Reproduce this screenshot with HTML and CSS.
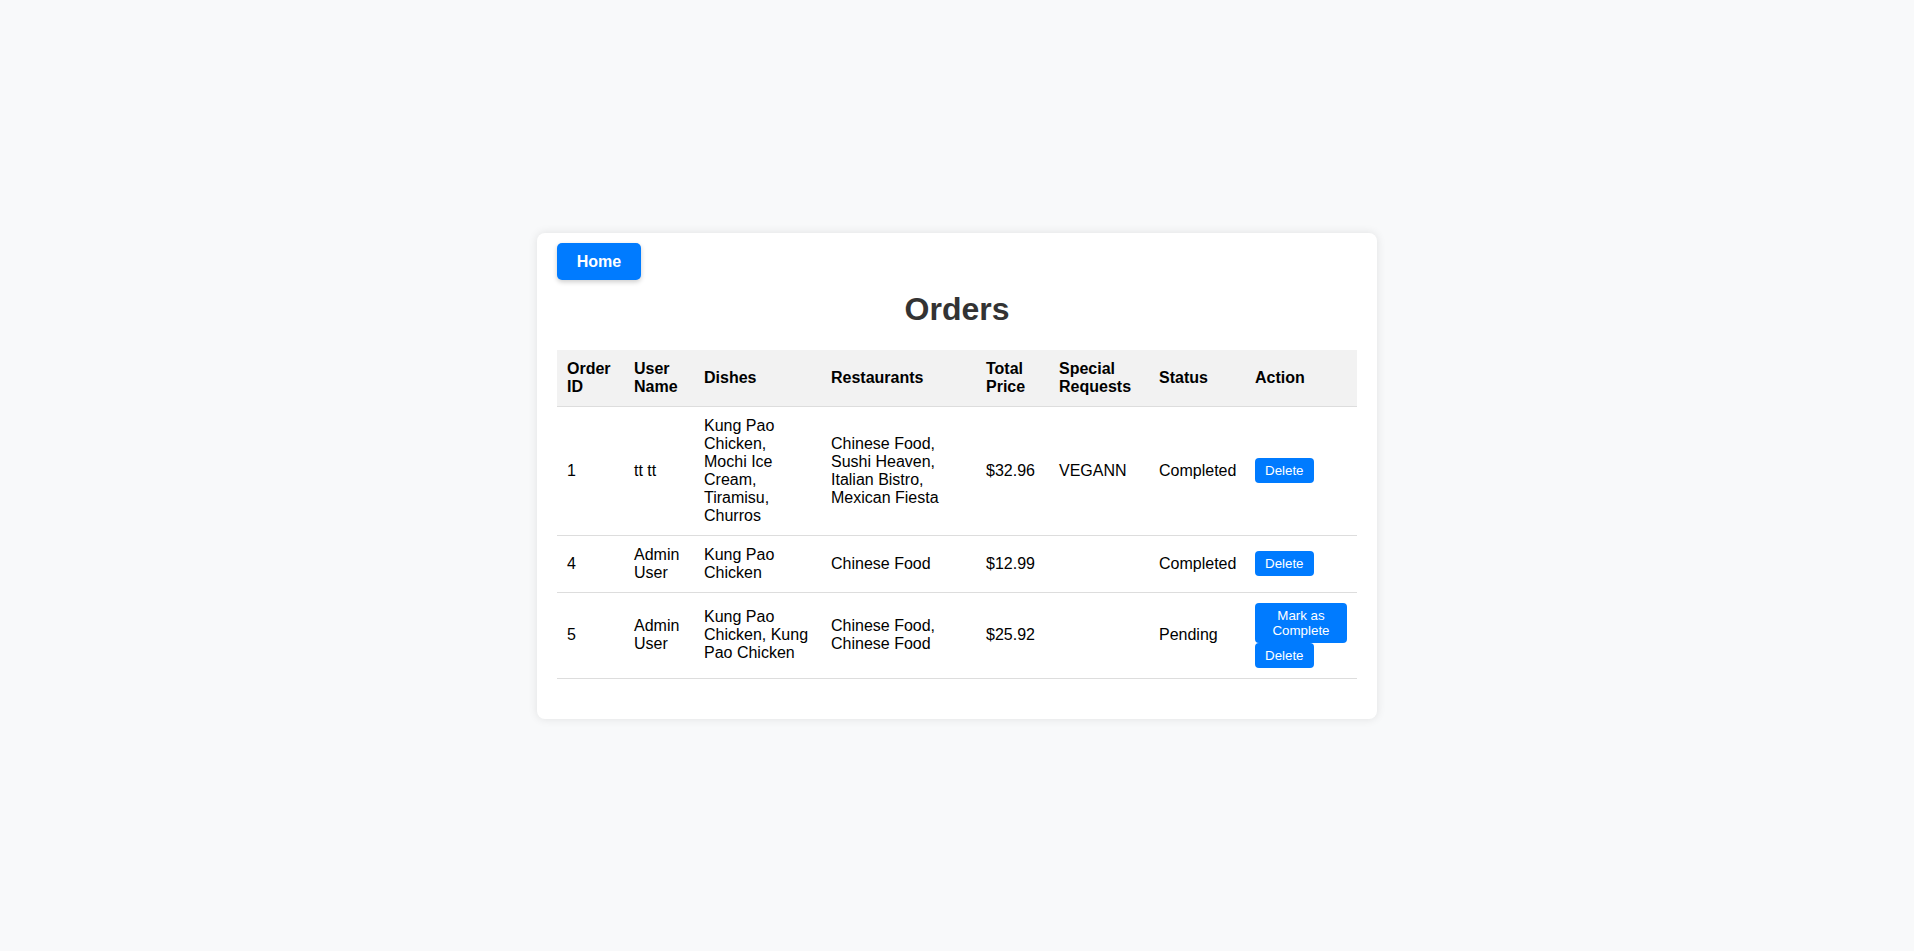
FILE: index.html
```html
<!DOCTYPE html>
<html lang="en">
<head>
<meta charset="utf-8">
<title>Orders</title>
<link rel="stylesheet" href="styles.css">
</head>
<body>
<div class="card">
  <div class="nav">
    <a class="home-btn" href="#">Home</a>
  </div>
  <h1 class="title">Orders</h1>
  <table class="orders">
    <colgroup>
      <col class="c-id">
      <col class="c-user">
      <col class="c-dishes">
      <col class="c-rest">
      <col class="c-price">
      <col class="c-req">
      <col class="c-status">
      <col class="c-action">
    </colgroup>
    <thead>
      <tr>
        <th>Order ID</th>
        <th>User Name</th>
        <th>Dishes</th>
        <th>Restaurants</th>
        <th>Total Price</th>
        <th>Special Requests</th>
        <th>Status</th>
        <th>Action</th>
      </tr>
    </thead>
    <tbody>
      <tr>
        <td>1</td>
        <td>tt tt</td>
        <td>Kung Pao Chicken, Mochi Ice Cream, Tiramisu, Churros</td>
        <td>Chinese Food, Sushi Heaven, Italian Bistro, Mexican Fiesta</td>
        <td>$32.96</td>
        <td>VEGANN</td>
        <td>Completed</td>
        <td><button class="act-btn">Delete</button></td>
      </tr>
      <tr>
        <td>4</td>
        <td>Admin User</td>
        <td>Kung Pao Chicken</td>
        <td>Chinese Food</td>
        <td>$12.99</td>
        <td></td>
        <td>Completed</td>
        <td><button class="act-btn">Delete</button></td>
      </tr>
      <tr>
        <td>5</td>
        <td>Admin User</td>
        <td>Kung Pao Chicken, Kung Pao Chicken</td>
        <td>Chinese Food, Chinese Food</td>
        <td>$25.92</td>
        <td></td>
        <td>Pending</td>
        <td><button class="act-btn">Mark as Complete</button><button class="act-btn">Delete</button></td>
      </tr>
    </tbody>
  </table>
</div>
</body>
</html>
```
FILE: styles.css
```css
html, body {
  margin: 0;
  padding: 0;
}
body {
  background: #f8f9fa;
  font-family: "Liberation Sans", Arial, sans-serif;
  font-size: 16px;
  color: #000;
  min-height: 100vh;
  display: flex;
  align-items: center;
  justify-content: center;
}
.card {
  width: 800px;
  background: #fff;
  border-radius: 8px;
  box-shadow: 0 0 10px rgba(0, 0, 0, 0.1);
  padding: 10px 20px 40px;
}
.nav {
  display: flex;
}
.home-btn {
  display: block;
  padding: 10px 17px;
  width: 50px;
  text-align: center;
  line-height: 17px;
  background: #007bff;
  color: #fff;
  font-weight: bold;
  font-size: 16px;
  text-decoration: none;
  border-radius: 5px;
  box-shadow: 0 2px 5px rgba(0, 0, 0, 0.2);
}
.title {
  margin: 11px 0 22px;
  font-size: 32px;
  color: #333;
  text-align: center;
}
.orders {
  width: 100%;
  border-collapse: collapse;
  table-layout: fixed;
}
.c-id { width: 67px; }
.c-user { width: 70px; }
.c-dishes { width: 127px; }
.c-rest { width: 155px; }
.c-price { width: 73px; }
.c-req { width: 100px; }
.c-status { width: 96px; }
.c-action { width: 112px; }
.orders th,
.orders td {
  padding: 10px;
  text-align: left;
  border-bottom: 1px solid #ddd;
  vertical-align: middle;
}
.orders th {
  background: #f2f2f2;
  font-weight: bold;
}
.act-btn {
  display: block;
  padding: 5px 10px;
  background: #007bff;
  color: #fff;
  border: none;
  border-radius: 4px;
  font-family: "Liberation Sans", Arial, sans-serif;
  font-size: 13.33px;
  line-height: 15px;
}
```
